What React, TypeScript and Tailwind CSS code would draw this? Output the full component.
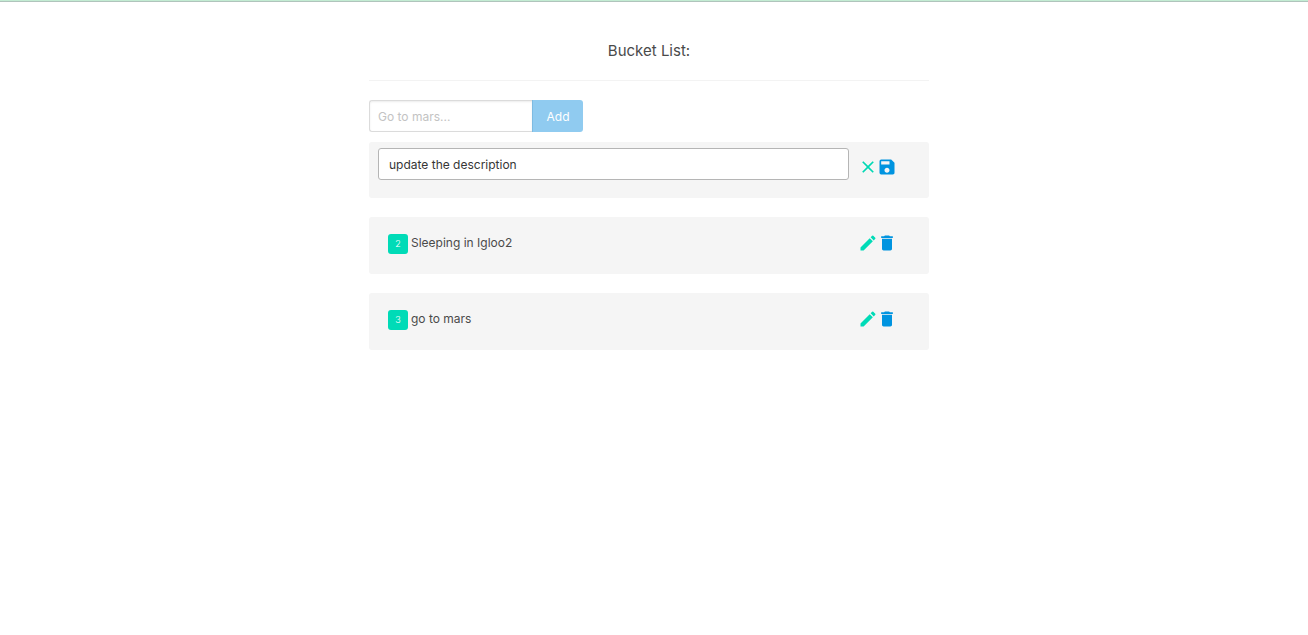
import { useState } from "react";
import { MdClose, MdDelete, MdEdit, MdSave } from "react-icons/md";

type Item = { id: number; text: string };

const initialItems: Item[] = [
  { id: 1, text: "update the description" },
  { id: 2, text: "Sleeping in Igloo2" },
  { id: 3, text: "go to mars" },
];

export default function App() {
  const [items, setItems] = useState(initialItems);
  const [editing, setEditing] = useState<number | null>(1);
  const [editText, setEditText] = useState("update the description");
  const [draft, setDraft] = useState("");

  const add = () => {
    if (!draft.trim()) return;
    setItems([...items, { id: items.length + 1, text: draft }]);
    setDraft("");
  };
  const save = (id: number) => {
    setItems(items.map((i) => (i.id === id ? { ...i, text: editText } : i)));
    setEditing(null);
  };

  return (
    <div className="min-h-screen bg-white font-['Inter',sans-serif] text-xs leading-5 text-[#4a4a4a]">
      <div className="h-0.5 border-b border-[#b0c4bc] bg-[#c3ecd3]" />
      <div className="pr-2.5">
        <main className="mx-auto max-w-[560px] pt-[37px]">
          <h1 className="text-center text-[15px] leading-6">Bucket List:</h1>
          <hr className="mt-[17px] mb-[19px] border-[#f3f3f3]" />
          <form
            className="mb-2.5 flex"
            onSubmit={(e) => {
              e.preventDefault();
              add();
            }}
          >
            <input
              aria-label="New item"
              placeholder="Go to mars..."
              value={draft}
              onChange={(e) => setDraft(e.target.value)}
              className="h-8 w-[163px] rounded-l-[3px] border border-r-0 border-[#dbdbdb] px-2 shadow-[inset_0_1px_2px_rgba(10,10,10,0.08)] outline-none placeholder:text-[#c3c3c3]"
            />
            <button
              type="submit"
              className="h-8 w-[51px] rounded-r-[3px] border-l border-[#7dbbe2] bg-[#90cbf0] pt-px text-white"
            >
              Add
            </button>
          </form>
          <ul className="flex flex-col gap-[19px]">
            {items.map((item) =>
              editing === item.id ? (
                <li
                  key={item.id}
                  className="flex items-start rounded-[3px] bg-[#f5f5f5] pt-1.5 pr-8 pb-[18px] pl-[9px]"
                >
                  <input
                    aria-label="Edit item"
                    value={editText}
                    onChange={(e) => setEditText(e.target.value)}
                    className="h-8 min-w-0 flex-1 rounded-[3px] border border-[#b5b5b5] bg-white px-2.5 text-[#363636] outline-none"
                  />
                  <div className="mt-[9px] ml-[9px] flex h-5 -space-x-px">
                    <button aria-label="Cancel" className="text-[#00d8b4]" onClick={() => setEditing(null)}>
                      <MdClose size={20} />
                    </button>
                    <button aria-label="Save" className="text-[#0094e0]" onClick={() => save(item.id)}>
                      <MdSave size={20} />
                    </button>
                  </div>
                </li>
              ) : (
                <li
                  key={item.id}
                  className="flex items-start rounded-[3px] bg-[#f5f5f5] pt-4 pr-8 pb-5 pl-[19px]"
                >
                  <span className="mt-px mr-[3px] flex size-5 items-center justify-center rounded-[3px] bg-[#00dbb7] text-[9px] font-light text-white">
                    {item.id}
                  </span>
                  <span className="flex-1">{item.text}</span>
                  <div className="flex h-5 -space-x-px">
                    <button
                      aria-label="Edit"
                      className="text-[#00dbb7]"
                      onClick={() => {
                        setEditing(item.id);
                        setEditText(item.text);
                      }}
                    >
                      <MdEdit size={20} />
                    </button>
                    <button
                      aria-label="Delete"
                      className="text-[#0094e0]"
                      onClick={() => setItems(items.filter((i) => i.id !== item.id))}
                    >
                      <MdDelete size={20} />
                    </button>
                  </div>
                </li>
              )
            )}
          </ul>
        </main>
      </div>
    </div>
  );
}
